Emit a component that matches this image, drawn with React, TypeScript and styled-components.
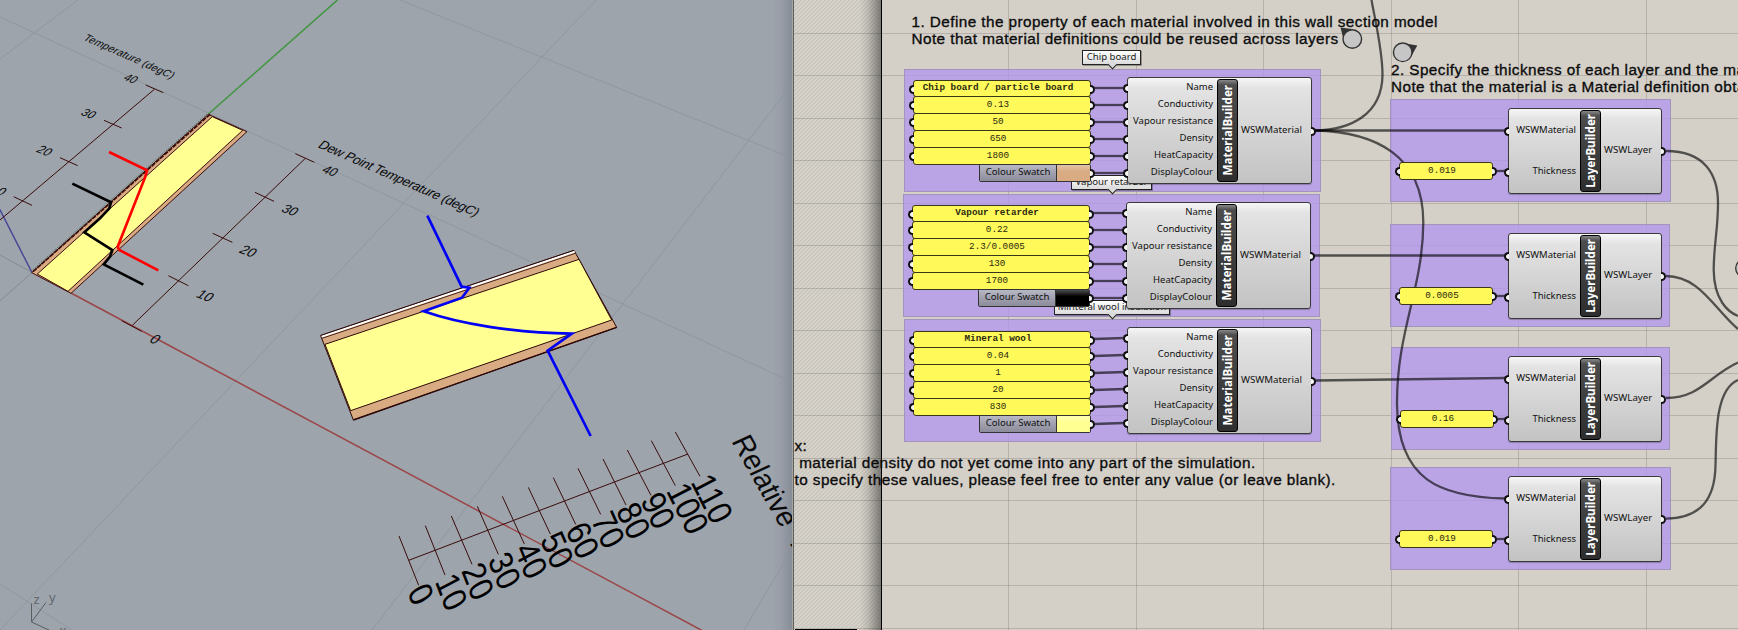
import React from "react";
import styled, { createGlobalStyle } from "styled-components";

const GlobalStyle = createGlobalStyle`
  * { box-sizing: border-box; }
  body { margin: 0; background: #9da4ac; overflow: hidden; }
`;

const LABEL_FONT = `"Noto Sans", "Open Sans", sans-serif`;
const NOTE_FONT = `"Liberation Sans", Arial, sans-serif`;
const ORIGIN = 794;

const Screen = styled.div`
  display: flex;
  width: 1738px;
  height: 630px;
  overflow: hidden;
`;

const Viewport = styled.div`
  flex: 0 0 792px;
  height: 100%;
  background: linear-gradient(90deg, #9da4ac 0, #9da4ac 772px, #989da8 781px, #878d95 792px);
  svg { display: block; }
`;

const Splitter = styled.div`
  flex: 0 0 2px;
  background: linear-gradient(90deg, #a4a4a0 0 50%, #5f5f5c 50% 100%);
`;

const Canvas = styled.div`
  position: relative;
  flex: 1;
  height: 100%;
  overflow: hidden;
  background: #d4d0c8;
`;

const Margin = styled.div`
  width: 88px;
  height: 100%;
  border-right: 1px solid #000;
  background:
    linear-gradient(90deg, rgba(0,0,0,0) 66px, rgba(0,0,0,.1) 74px, rgba(0,0,0,.42) 87px),
    repeating-linear-gradient(135deg, #d5d2ca 0 1.7px, #cbc7be 1.7px 2.83px);
`;

const BottomBar = styled.div`
  position: absolute;
  left: 1px;
  bottom: 0;
  width: 62px;
  height: 1px;
  background: #000;
`;

const Layer = styled.svg`
  position: absolute;
  inset: 0;
  display: block;
`;

type Pos = { $x: number; $y: number };

const Group = styled.div<Pos & { $w: number; $h: number }>`
  position: absolute;
  left: ${(p) => p.$x - ORIGIN}px;
  top: ${(p) => p.$y}px;
  width: ${(p) => p.$w}px;
  height: ${(p) => p.$h}px;
  background: rgba(179, 149, 240, 0.75);
  border: 1px solid #a293bf;
`;

const PanelStack = styled.div<Pos & { $w: number }>`
  position: absolute;
  left: ${(p) => p.$x - ORIGIN}px;
  top: ${(p) => p.$y}px;
  width: ${(p) => p.$w}px;
  display: flex;
  flex-direction: column;
  align-items: flex-end;
`;

const PanelRow = styled.div<{ $bold?: boolean }>`
  position: relative;
  width: 100%;
  height: ${(p) => (p.$bold ? 17 : 18)}px;
  margin-bottom: -1px;
  padding: 0 8px 1px 0;
  display: flex;
  align-items: center;
  justify-content: center;
  background: #fffa5a;
  border: 1.5px solid #38371a;
  border-radius: 3px;
  color: #2b2910;
  font: ${(p) => (p.$bold ? 700 : 400)} 9.3px/14px "Liberation Mono", monospace;
  white-space: pre;
`;

const SwatchRow = styled.div`
  position: relative;
  display: flex;
  width: 112px;
  height: 18px;
  border: 1px solid #333;
  border-radius: 2px;
`;

const SwatchName = styled.div`
  width: 77px;
  text-align: center;
  background: linear-gradient(#b9b9c6 0, #a2a2b0 45%, #8c8c9a 100%);
  border-right: 1px solid #333;
  color: #111;
  font: 9.6px/14px ${LABEL_FONT};
  white-space: nowrap;
`;

const SwatchColour = styled.div<{ $colour: string }>`
  flex: 1;
  background: linear-gradient(rgba(255,255,255,.3), rgba(255,255,255,0) 40%), ${(p) => p.$colour};
`;

const Port = styled.i<{ $side: "left" | "right" }>`
  position: absolute;
  ${(p) => p.$side}: -5px;
  top: 50%;
  margin-top: -4px;
  width: 5px;
  height: 9px;
  background: #f4f4f4;
  border: 2px solid #111;
  ${(p) => (p.$side === "left"
    ? "border-right: 0; border-radius: 5px 0 0 5px;"
    : "border-left: 0; border-radius: 0 5px 5px 0;")}
`;

const Component = styled.div<Pos & { $w: number; $h: number; $cols: string }>`
  position: absolute;
  left: ${(p) => p.$x - ORIGIN}px;
  top: ${(p) => p.$y}px;
  width: ${(p) => p.$w}px;
  height: ${(p) => p.$h}px;
  display: grid;
  grid-template-columns: ${(p) => p.$cols};
  background: linear-gradient(#f6f6f6 0, #e3e3e3 10px, #c3c3c3 100%);
  border: 1.5px solid #3a3a3a;
  border-radius: 3px;
  box-shadow: 0 1px 1px rgba(0, 0, 0, 0.25);
`;

const Inputs = styled.div<{ $row: number }>`
  display: grid;
  grid-auto-rows: ${(p) => p.$row}px;
  padding: 1px 4px 0 0;
`;

const InputName = styled.div`
  position: relative;
  display: flex;
  align-items: center;
  justify-content: flex-end;
  padding-bottom: 2px;
  color: #111;
  font: 9.5px/14px ${LABEL_FONT};
  white-space: nowrap;
`;

const Pill = styled.div`
  display: flex;
  align-items: center;
  justify-content: center;
  margin: 1px 0;
  background: linear-gradient(#888 0, #4c4c4c 5px, #2e2e2e 100%);
  border: 1px solid #000;
  border-radius: 3px;
`;

const PillText = styled.span<{ $size: number }>`
  writing-mode: vertical-rl;
  transform: rotate(180deg);
  color: #fff;
  font: 700 ${(p) => p.$size}px/16px ${LABEL_FONT};
  white-space: nowrap;
`;

const Output = styled.div`
  position: relative;
  display: flex;
  align-items: center;
  padding: 0 0 2px 3px;
  color: #111;
  font: 9.7px/14px ${LABEL_FONT};
`;

const Bubble = styled.div<Pos & { $w: number }>`
  position: absolute;
  left: ${(p) => p.$x - ORIGIN}px;
  top: ${(p) => p.$y}px;
  width: ${(p) => p.$w}px;
  height: 15px;
  text-align: center;
  background: linear-gradient(#fff, #dcdcdc);
  border: 1px solid #222;
  box-shadow: 1px 1px 0 rgba(0, 0, 0, 0.3);
  color: #222;
  font: 9.6px/12px ${LABEL_FONT};
  white-space: nowrap;
  &::after {
    content: "";
    position: absolute;
    left: 50%;
    bottom: -4px;
    width: 6px;
    height: 6px;
    margin-left: -3px;
    background: #dcdcdc;
    border: solid #222;
    border-width: 0 1px 1px 0;
    transform: rotate(45deg);
  }
`;

const Note = styled.div<Pos>`
  position: absolute;
  left: ${(p) => p.$x - ORIGIN}px;
  top: ${(p) => p.$y}px;
  display: flex;
  flex-direction: column;
  color: #0c0c0c;
  font: 15.3px/17.2px ${NOTE_FONT};
  letter-spacing: 0.43px;
  -webkit-text-stroke: 0.35px #0c0c0c;
  white-space: pre;
`;

const NoteLine = styled.span``;

const materials = [
  { x: 904, y: 69, px: 913, py: 80, bx: 1082, bw: 59, title: "Chip board", colour: "#d9ab82",
    rows: ["Chip board / particle board", "0.13", "50", "650", "1800"] },
  { x: 903, y: 194, px: 912, py: 205, bx: 1071, bw: 81, title: "Vapour retarder", colour: "#000",
    rows: ["Vapour retarder", "0.22", "2.3/0.0005", "130", "1700"] },
  { x: 904, y: 319, px: 913, py: 331, bx: 1054, bw: 116, title: "Minteral wool insulation", colour: "#ffff92",
    rows: ["Mineral wool", "0.04", "1", "20", "830"] },
];

const inputNames = ["Name", "Conductivity", "Vapour resistance", "Density", "HeatCapacity", "DisplayColour"];

const layers = [
  { x: 1390, w: 281, y: 99, cx: 1508, px: 1399, py: 162, value: "0.019" },
  { x: 1390, w: 280, y: 224, cx: 1508, px: 1399, py: 287, value: "0.0005" },
  { x: 1391, w: 279, y: 347, cx: 1508, px: 1400, py: 410, value: "0.16" },
  { x: 1390, w: 281, y: 467, cx: 1508, px: 1399, py: 530, value: "0.019" },
];

/* Text lying on the tilted ground plane, centred or started at a point */
function GroundText({ x, y, angle, slant = 0, stretch = 1, size, anchor = "middle", length, children }: {
  x: number; y: number; angle: number; slant?: number; stretch?: number; size: number;
  anchor?: "middle" | "start"; length?: number; children: React.ReactNode;
}) {
  return (
    <text
      transform={`translate(${x} ${y}) rotate(${angle}) skewX(${slant}) scale(1 ${stretch})`}
      fontSize={size}
      textAnchor={anchor}
      dy={anchor === "middle" ? size * 0.36 : 0}
      textLength={length}
    >
      {children}
    </text>
  );
}

const scaleTicks: [number, number, number, number, number, number][] = [
  [57, 408, 116, 556, 124, 582], [136, 377, 195, 525, 216, 575], [214, 348, 276, 493, 295, 543],
  [292, 319, 355, 463, 375, 511], [367, 289, 433, 432, 455, 480], [445, 262, 511, 402, 533, 449],
  [520, 233, 587, 373, 609, 420], [594, 205, 662, 343, 686, 389], [669, 177, 738, 315, 762, 361],
  [742, 150, 813, 286, 836, 331], [814, 122, 886, 257, 925, 324], [886, 96, 960, 229, 998, 295],
];

function Scene() {
  return (
    <svg width="792" height="630" fontFamily="Liberation Sans, Arial, sans-serif" fill="none">
      <g stroke="#8c939a" strokeWidth="1" opacity=".75">
        <path d="M0 17L792 382M0 59L78 0M400 0L792 158M596 0L0 630M792 84L372 630M792 549L744 630M0 584L72 630" />
        <path d="M0 255L32 272.500L0 301" stroke="#7f8388" />
      </g>
      <path d="M71 293L702 630.500" stroke="#9b4648" strokeWidth="1.5" />
      <path d="M337.500 0L208.500 114" stroke="#419640" strokeWidth="1.600" />
      <path d="M-1 208L32 272.500" stroke="#4a4896" strokeWidth="1.500" />

      <g transform="scale(.33333)">
        <g stroke="#3a0b0b" strokeWidth="3">
          <path d="M95 818L625 343L741 395L213 880Z" fill="#d9ab82" />
          <path d="M112 822L637 350L728 391L204 874Z" fill="#ffff92" />
          <path d="M99 815L630 343" strokeWidth="5" strokeDasharray="14 3" />
          <path d="M463 268L0 660M437 255L490 278M312 361L365 384M180 473L233 497M41 590L96 616" />
          <path d="M915 476L397 976M886 461L943 487M765 577L822 604M638 700L697 727M505 827L565 857M365 962L425 994" />
        </g>
        <path d="M93 814L622 341" stroke="#2f6b35" strokeWidth="2" strokeDasharray="4 4" />
        <path d="M217 551L333 607L328 625L300 655L253 697L337 750L330 770L311 793L430 854" stroke="#000" strokeWidth="8" />
        <path d="M327 456L441 511L436 530L353 740L358 750L475 811" stroke="#f00" strokeWidth="8" />
      </g>

      <g transform="translate(280 120) scale(.33333)" stroke="#2c0808" strokeWidth="3">
        <path d="M122 647L882 391L1010 622L220 900Z" fill="#d9ab82" />
        <path d="M125 650L884 395" stroke="#fff" strokeWidth="6" />
        <path d="M122 646L882 391M126 655L886 400" strokeWidth="2.500" />
        <path d="M135 673L897 418L995 600L212 872Z" fill="#ffff92" />
        <path d="M220 900L1010 622" strokeWidth="4" />
        <path d="M442 287L545 500L568 503L546 533L431 574C540 612 700 638 875 641L803 692L932 948" stroke="#0000f5" strokeWidth="8" />
      </g>

      <g transform="translate(380 400) scale(.33333)">
        <path d="M86 481L924 162" stroke="#3a0b0b" strokeWidth="3" />
        {scaleTicks.map(([a, b, c, d], i) => (
          <path key={i} d={`M${a} ${b}L${c} ${d}`} stroke="#3a0b0b" strokeWidth="3" />
        ))}
        <g fill="#000">
          {scaleTicks.map(([, , , , lx, ly], i) => (
            <GroundText key={i} x={lx} y={ly} angle={70 - i * 0.65} slant={8 - i * 0.7} stretch={1.12} size={93}>
              {String(i * 10)}
            </GroundText>
          ))}
        </g>
      </g>

      <g fill="#0a0a0a">
        <GroundText x={82.5} y={39.5} angle={24} slant={-20} size={10.5} anchor="start" length={97}>Temperature (degC)</GroundText>
        <GroundText x={317} y={147} angle={23.8} slant={-18} size={13} anchor="start" length={173}>Dew Point Temperature (degC)</GroundText>
        <GroundText x={131} y={78.5} angle={20} slant={-25} size={11}>40</GroundText>
        <GroundText x={89} y={113.5} angle={20} slant={-25} size={11.5}>30</GroundText>
        <GroundText x={45} y={150.5} angle={20} slant={-25} size={12}>20</GroundText>
        <GroundText x={-1} y={190} angle={20} slant={-25} size={12}>10</GroundText>
        <GroundText x={330.500} y={170.700} angle={20} slant={-22} size={12.5}>40</GroundText>
        <GroundText x={290.500} y={210} angle={20} slant={-22} size={13}>30</GroundText>
        <GroundText x={248.500} y={251} angle={20} slant={-22} size={13.5}>20</GroundText>
        <GroundText x={205.500} y={295.500} angle={20} slant={-22} size={13.5}>10</GroundText>
        <GroundText x={155.500} y={339} angle={20} slant={-22} size={14}>0</GroundText>
        <GroundText x={731} y={441} angle={60.300} slant={-5} stretch={1.05} size={28} anchor="start">
          Relative<tspan dx="8"> Humidity</tspan>
        </GroundText>
      </g>

      <g stroke="#5c5e60" strokeWidth="1">
        <path d="M31.500 603.500V622L46 602.500M31.500 622L49 630" />
      </g>
      <g fill="#63666a" fontSize="13" fontFamily="Noto Sans, sans-serif">
        <text x="33.500" y="604">z</text>
        <text x="49" y="602">y</text>
        <text x="59.500" y="634.500">x</text>
      </g>
    </svg>
  );
}

const gridY = [33, 75, 118, 160, 203, 245, 288, 330, 373, 415, 458, 500, 543, 585, 628];
const gridX = [1008, 1136, 1263, 1391, 1518, 1646];

const CanvasGrid = () => (
  <Layer width="944" height="630" viewBox="794 0 944 630">
    <g stroke="#000" strokeOpacity=".14">
      {gridY.map((y) => <path key={y} d={`M794 ${y + 0.5}H1738`} />)}
      {gridX.map((x) => <path key={x} d={`M${x + 0.5} 0V630`} />)}
    </g>
  </Layer>
);

const Wires = () => (
  <Layer width="944" height="630" viewBox="794 0 944 630">
    <g fill="none" stroke="#000" strokeOpacity=".62" strokeWidth="2.300">
      {materials.map((m, i) => inputNames.map((n, r) => (
        <path key={n + i} d={`M${m.px + 181} ${m.py + 8 + r * 17}L${m.x + 220} ${m.y + 19 + r * 17}`} />
      )))}
      {layers.map((l) => <path key={l.y} d={`M${l.px + 96} ${l.py + 9}L${l.cx - 3} ${l.y + 72}`} />)}
      <path d="M1315 130.500H1506M1314 255.500H1505M1315 380.500L1505 378" />
      <path d="M1315 130.500C1350 130 1382 115 1382.500 75C1382.500 50 1375 20 1371.500 0" />
      <path d="M1315 130.500C1375 132 1423 155 1423.300 222C1423 290 1396.500 330 1397 405C1398 480 1440 497 1505 498.500" />
      <path d="M1666 151C1705 151 1718 175 1718 203C1718 230 1713.700 245 1713.700 270C1714 300 1728 312 1738 316" />
      <path d="M1666 276C1700 276 1715 310 1738 329" />
      <path d="M1666 398C1700 398 1710 375 1738 362.500" />
      <path d="M1666 518.700C1700 518 1715 500 1715.500 465C1716.500 440 1714 390 1738 380" />
    </g>
  </Layer>
);

const Markers = () => (
  <Layer width="944" height="630" viewBox="794 0 944 630">
    <path d="M1340.500 27.500L1352 29L1343 37.500Z" fill="#333" />
    <circle cx="1352.300" cy="39" r="9.300" fill="#c6c6c6" stroke="#333" strokeWidth="1.400" />
    <path d="M1417.300 45.500L1403 43L1411.500 56Z" fill="#333" />
    <circle cx="1402.700" cy="52.300" r="9.300" fill="#c6c6c6" stroke="#333" strokeWidth="1.400" />
    <circle cx="1745" cy="268.300" r="9.300" fill="#c6c6c6" stroke="#333" strokeWidth="1.400" />
  </Layer>
);

export default function App() {
  return (
    <>
      <GlobalStyle />
      <Screen>
        <Viewport><Scene /></Viewport>
        <Splitter />
        <Canvas>
          <Margin />
          <CanvasGrid />
          <BottomBar />
          {materials.map((m) => <Group key={m.title} $x={m.x} $y={m.y} $w={417} $h={123} />)}
          {layers.map((l) => <Group key={l.y} $x={l.x} $y={l.y} $w={l.w} $h={103} />)}
          <Note $x={911.5} $y={13}>
            <NoteLine>1. Define the property of each material involved in this wall section model</NoteLine>
            <NoteLine>Note that material definitions could be reused across layers</NoteLine>
          </Note>
          <Note $x={1391} $y={60.500}>
            <NoteLine>2. Specify the thickness of each layer and the material</NoteLine>
            <NoteLine>Note that the material is a Material definition obtained</NoteLine>
          </Note>
          <Note $x={794.5} $y={436.500}>
            <NoteLine>x:</NoteLine>
            <NoteLine> material density do not yet come into any part of the simulation.</NoteLine>
            <NoteLine>to specify these values, please feel free to enter any value (or leave blank).</NoteLine>
          </Note>
          {materials.map((m) => <Bubble key={m.title} $x={m.bx} $y={m.y - 19} $w={m.bw}>{m.title}</Bubble>)}
          <Wires />
          {materials.map((m) => (
            <React.Fragment key={m.title}>
              <PanelStack $x={m.px} $y={m.py} $w={178}>
                {m.rows.map((value, i) => (
                  <PanelRow key={i} $bold={i === 0}>
                    <Port $side="left" />
                    {value}
                    <Port $side="right" />
                  </PanelRow>
                ))}
                <SwatchRow>
                  <SwatchName>Colour Swatch</SwatchName>
                  <SwatchColour $colour={m.colour} />
                  <Port $side="right" />
                </SwatchRow>
              </PanelStack>
              <Component $x={m.x + 223} $y={m.y + 8} $w={185} $h={107} $cols="89px 21px 1fr">
                <Inputs $row={17}>
                  {inputNames.map((name) => (
                    <InputName key={name}><Port $side="left" />{name}</InputName>
                  ))}
                </Inputs>
                <Pill><PillText $size={11.6}>MaterialBuilder</PillText></Pill>
                <Output>WSWMaterial<Port $side="right" /></Output>
              </Component>
            </React.Fragment>
          ))}
          {layers.map((l) => (
            <React.Fragment key={l.y}>
              <PanelStack $x={l.px} $y={l.py} $w={94}>
                <PanelRow><Port $side="left" />{l.value}<Port $side="right" /></PanelRow>
              </PanelStack>
              <Component $x={l.cx} $y={l.y + 9} $w={154} $h={86} $cols="71px 21px 1fr">
                <Inputs $row={41}>
                  <InputName><Port $side="left" />WSWMaterial</InputName>
                  <InputName><Port $side="left" />Thickness</InputName>
                </Inputs>
                <Pill><PillText $size={11.6}>LayerBuilder</PillText></Pill>
                <Output>WSWLayer<Port $side="right" /></Output>
              </Component>
            </React.Fragment>
          ))}
          <Markers />
        </Canvas>
      </Screen>
    </>
  );
}
